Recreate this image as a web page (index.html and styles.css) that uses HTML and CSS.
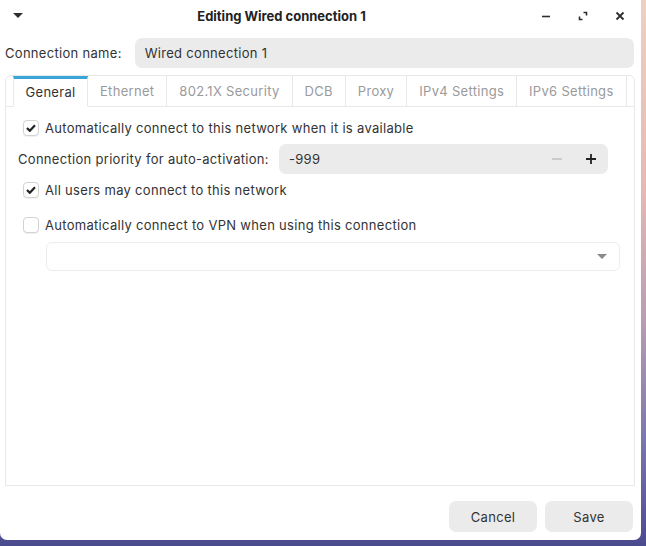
FILE: index.html
```html
<!DOCTYPE html>
<html lang="en">
<head>
<meta charset="utf-8">
<title>Editing Wired connection 1</title>
<link rel="stylesheet" href="styles.css">
</head>
<body>
<div class="desktop">
  <div class="window">
    <header class="titlebar">
      <button class="menu-btn" aria-label="Menu">
        <svg width="10" height="6" viewBox="0 0 10 6"><path d="M0 0h10L5 5z" fill="#2e2e2e"/></svg>
      </button>
      <h1 class="title">Editing Wired connection 1</h1>
      <div class="controls">
        <button class="ctl" aria-label="Minimize">
          <svg width="10" height="10" viewBox="0 0 10 10"><path d="M1 5.5h8" stroke="#2e2e2e" stroke-width="1.6"/></svg>
        </button>
        <button class="ctl" aria-label="Maximize">
          <svg width="10" height="10" viewBox="0 0 10 10"><path d="M5.5 1.5h3v3M1.5 5.5v3h3" stroke="#2e2e2e" stroke-width="1.6" fill="none"/></svg>
        </button>
        <button class="ctl" aria-label="Close">
          <svg width="10" height="10" viewBox="0 0 10 10"><path d="M1.5 1.5l7 7M8.5 1.5l-7 7" stroke="#2e2e2e" stroke-width="1.8"/></svg>
        </button>
      </div>
    </header>

    <div class="name-row">
      <label class="name-label">Connection name:</label>
      <div class="entry">Wired connection 1</div>
    </div>

    <div class="notebook">
      <nav class="tabs">
        <div class="tab active">General</div>
        <div class="tab">Ethernet</div>
        <div class="tab">802.1X Security</div>
        <div class="tab">DCB</div>
        <div class="tab">Proxy</div>
        <div class="tab">IPv4 Settings</div>
        <div class="tab">IPv6 Settings</div>
      </nav>
      <div class="page">
        <div class="check-row">
          <span class="check checked"><svg width="10" height="8" viewBox="0 0 10 8"><path d="M1 4l2.8 2.8L9 1.2" stroke="#222" stroke-width="2.2" fill="none"/></svg></span>
          <span>Automatically connect to this network when it is available</span>
        </div>
        <div class="prio-row">
          <span class="prio-label">Connection priority for auto-activation:</span>
          <div class="spin">
            <span class="spin-value">-999</span>
            <span class="spin-btn">
              <svg width="12" height="12" viewBox="0 0 12 12"><path d="M1 6h10" stroke="#bdbdbd" stroke-width="1.4"/></svg>
            </span>
            <span class="spin-btn">
              <svg width="12" height="12" viewBox="0 0 12 12"><path d="M1 6h10M6 1v10" stroke="#222" stroke-width="1.8"/></svg>
            </span>
          </div>
        </div>
        <div class="check-row">
          <span class="check checked"><svg width="10" height="8" viewBox="0 0 10 8"><path d="M1 4l2.8 2.8L9 1.2" stroke="#222" stroke-width="2.2" fill="none"/></svg></span>
          <span>All users may connect to this network</span>
        </div>
        <div class="check-row vpn">
          <span class="check"></span>
          <span>Automatically connect to VPN when using this connection</span>
        </div>
        <div class="combo">
          <svg width="10" height="6" viewBox="0 0 10 6"><path d="M0 0h10L5 5z" fill="#8a8a8a"/></svg>
        </div>
      </div>
    </div>

    <footer class="actions">
      <button class="btn">Cancel</button>
      <button class="btn">Save</button>
    </footer>
  </div>
</div>
</body>
</html>
```

FILE: styles.css
```css
html, body {
  margin: 0;
  padding: 0;
  width: 646px;
  height: 546px;
  overflow: hidden;
}

body {
  font-family: Inter, "Noto Sans", sans-serif;
  font-size: 13px;
  letter-spacing: 0.3px;
  color: #333;
}

.desktop {
  width: 646px;
  height: 546px;
  background:
    linear-gradient(180deg, #efd0bf 0%, #e6b9b2 35%, #b79ab4 60%, #7d78ad 80%, #4a4a8e 100%);
}

.window {
  width: 641px;
  height: 540px;
  background: #fff;
  border-radius: 0 0 7px 7px;
  display: flex;
  flex-direction: column;
  box-sizing: border-box;
}

button {
  font: inherit;
  letter-spacing: inherit;
  border: none;
  background: none;
  padding: 0;
  cursor: default;
}

/* header bar */
.titlebar {
  height: 32px;
  display: flex;
  align-items: center;
}

.menu-btn {
  width: 36px;
  height: 32px;
  display: flex;
  align-items: center;
  justify-content: center;
}

.title {
  flex: 1;
  margin: 0;
  text-align: center;
  font-size: 13px;
  font-weight: 700;
  letter-spacing: 0;
  color: #222;
}

.controls {
  display: flex;
  margin-right: 3px;
}

.ctl {
  width: 37px;
  height: 32px;
  display: flex;
  align-items: center;
  justify-content: center;
}

/* connection name */
.name-row {
  display: flex;
  align-items: center;
  padding: 6px 7px 0 5px;
  gap: 13px;
}

.entry {
  flex: 1;
  height: 30px;
  line-height: 30px;
  background: #ebebeb;
  border-radius: 7px;
  padding: 0 10px;
}

/* notebook */
.notebook {
  margin: 7px 6px 0 5px;
  height: 409px;
  border: 1px solid #e8e8e8;
  border-radius: 6px 6px 0 0;
  display: flex;
  flex-direction: column;
}

.tabs {
  display: flex;
  padding-left: 7px;
  height: 30px;
  border-bottom: 1px solid #e8e8e8;
}

.tab {
  padding: 0 12px;
  display: flex;
  align-items: center;
  color: #9a9a9a;
  border-right: 1px solid #e8e8e8;
  box-sizing: border-box;
}

.tab.active {
  color: #333;
  border-top: 3px solid #3aa5d8;
  padding-bottom: 2px;
  width: 75px;
  justify-content: center;
  border-left: 1px solid #e8e8e8;
  border-bottom: 1px solid #fff;
  margin-bottom: -1px;
}

.page {
  padding: 11px 14px 0 12px;
  display: flex;
  flex-direction: column;
}

.check-row {
  display: flex;
  align-items: center;
  gap: 6px;
  height: 20px;
  margin-left: 5px;
}

.check {
  width: 16px;
  height: 16px;
  border: 1px solid #d2d2d2;
  border-radius: 4px;
  box-sizing: border-box;
  display: flex;
  align-items: center;
  justify-content: center;
  background: #fff;
  box-shadow: 0 1px 1px rgba(0, 0, 0, 0.06);
}

.prio-row {
  display: flex;
  align-items: center;
  margin: 6px 12px 6px 0;
  gap: 10px;
}

.spin {
  flex: 1;
  height: 30px;
  background: #ebebeb;
  border-radius: 7px;
  display: flex;
  align-items: center;
  padding-left: 10px;
}

.spin-value {
  flex: 1;
}

.spin-btn {
  width: 34px;
  height: 30px;
  display: flex;
  align-items: center;
  justify-content: center;
}

.check-row.vpn {
  margin-top: 15px;
}

.combo {
  margin: 7px 0 0 28px;
  height: 29px;
  border: 1px solid #ececec;
  border-radius: 6px;
  box-sizing: border-box;
  display: flex;
  align-items: center;
  justify-content: flex-end;
  padding-right: 12px;
}

/* dialog buttons */
.actions {
  display: flex;
  justify-content: flex-end;
  gap: 8px;
  padding: 15px 8px 0 0;
}

.btn {
  width: 88px;
  height: 31px;
  background: #ebebeb;
  border-radius: 7px;
  color: #333;
}
```
